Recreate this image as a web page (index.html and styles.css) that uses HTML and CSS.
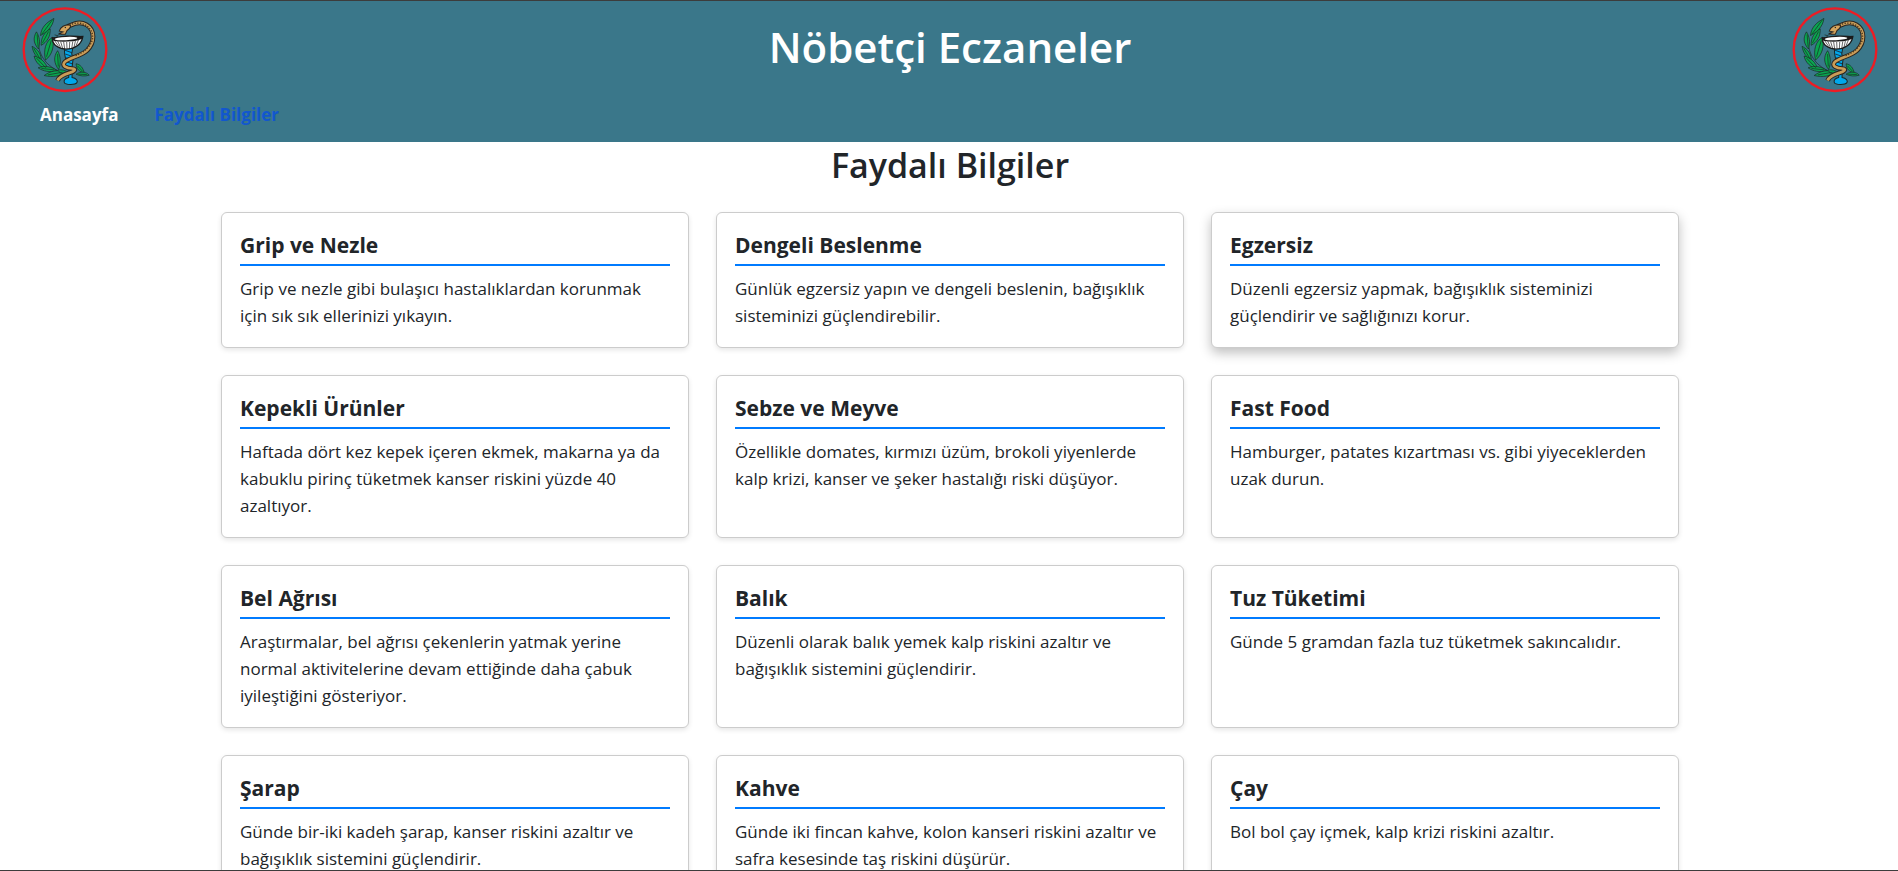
FILE: index.html
```html
<!DOCTYPE html>
<html lang="tr">
<head>
<meta charset="utf-8">
<meta name="viewport" content="width=device-width, initial-scale=1">
<title>Nöbetçi Eczaneler</title>
<link rel="stylesheet" href="styles.css">
</head>
<body>
<svg class="symbols" aria-hidden="true">
  <symbol id="eczane-logo" viewBox="22 22 256 256">
    <circle cx="150" cy="149" r="123" fill="none" stroke="#ed1c24" stroke-width="7"/>
    <!-- laurel branch -->
    <g fill="#0aa550" stroke="#1b2523" stroke-width="2" stroke-linejoin="round">
      <path d="M70 130C74 165 92 200 145 218" fill="none"/>
      <path d="M117 56C96 68 80 80 77 107C94 98 114 82 117 56Z"/>
      <path d="M65 96C53 116 58 132 71 147C77 126 74 110 65 96Z"/>
      <path d="M106 87C90 97 78 112 79 136C96 127 107 110 106 87Z"/>
      <path d="M52 139C55 158 64 171 80 182C79 162 70 148 52 139Z"/>
      <path d="M113 112C92 124 85 150 92 180C112 164 119 139 113 112Z"/>
      <path d="M58 168C62 187 76 201 99 208C93 187 80 174 58 168Z"/>
      <path d="M128 152C115 170 117 190 131 208C139 188 137 168 128 152Z"/>
      <path d="M70 203C86 214 104 217 126 211C110 199 89 196 70 203Z"/>
      <path d="M88 226C106 212 128 208 154 216C136 228 113 232 88 226Z"/>
      <path d="M128 210C142 207 153 211 166 220C150 226 138 222 128 210Z"/>
      <path d="M183 191C196 193 204 204 207 217C192 216 184 205 183 191Z"/>
      <path d="M183 222C196 213 213 214 222 225C209 229 195 228 183 222Z"/>
    </g>
    <path d="M112 61L81 103M67 104L70 140M101 95L83 129M57 145L76 177M109 122L95 170M65 174L93 203M128 162L130 199M80 205L118 209M99 224L143 216M187 197L202 213M190 222L215 223" fill="none" stroke="#1b2523" stroke-width="2"/>
    <!-- stem and foot of the cup -->
    <path d="M148 145H173L170 161L174 178L171 201V232C183 234 190 241 185 248C180 254 151 254 148 247C145 239 151 234 161 232L162 202L150 198L152 178L149 162Z" fill="#00a8ec" stroke="#1b2523" stroke-width="3"/>
    <path d="M150 151L171 158M151 162L171 169M152 173L172 180M152 184L171 191" stroke="#143b54" stroke-width="3"/>
    <!-- snake -->
    <path d="M148 88C167 72 193 63 214 75C240 90 239 128 216 151C197 169 166 171 150 185C137 197 156 205 171 205C187 206 177 215 163 218C147 223 133 228 128 241" fill="none" stroke="#2b251f" stroke-width="14"/>
    <path d="M148 88C167 72 193 63 214 75C240 90 239 128 216 151C197 169 166 171 150 185C137 197 156 205 171 205C187 206 177 215 163 218C147 223 133 228 128 241" fill="none" stroke="#c99c58" stroke-width="8"/>
    <path d="M163 76C194 61 224 76 231 101C239 132 207 158 181 167" fill="none" stroke="#4a3820" stroke-width="4" stroke-dasharray="4 4"/>
    <path d="M133 94C136 82 149 73 166 76C168 82 162 88 156 92L151 103C144 104 137 103 133 101L144 96Z" fill="#d5a55d" stroke="#2b251f" stroke-width="3"/>
    <circle cx="151" cy="83" r="2" fill="#1b2523"/>
    <path d="M136 102L127 107L119 105M127 107L126 112" fill="none" stroke="#1b2523" stroke-width="2"/>
    <!-- cup -->
    <path d="M112 114C112 158 195 160 203 110Z" fill="#fff" stroke="#1b1b1b" stroke-width="4"/>
    <path d="M119 122L131 139M128 123L137 143M137 125L143 145M146 126L149 147M155 126L156 147M164 126L163 147M173 125L170 145M181 123L177 141M190 120L183 137" stroke="#1b1b1b" stroke-width="2"/>
    <ellipse cx="157" cy="116" rx="46" ry="9" transform="rotate(-3 157 116)" fill="#1b1b1b"/>
    <ellipse cx="153" cy="116" rx="34" ry="5" transform="rotate(-3 153 116)" fill="#fff"/>
  </symbol>
</svg>

<header class="header">
  <div class="header-top">
    <svg class="logo" role="img" aria-label="Eczane logosu"><use href="#eczane-logo"/></svg>
    <h1 class="site-title">Nöbetçi Eczaneler</h1>
    <svg class="logo" role="img" aria-label="Eczane logosu"><use href="#eczane-logo"/></svg>
  </div>
  <nav class="nav">
    <a class="nav-link" href="#">Anasayfa</a>
    <a class="nav-link nav-link-active" href="#bilgiler" aria-current="page">Faydalı Bilgiler</a>
  </nav>
</header>

<main class="content" id="bilgiler">
  <h2 class="page-title">Faydalı Bilgiler</h2>
  <div class="cards">
    <article class="card"><h3 class="card-title">Grip ve Nezle</h3><p class="card-text">Grip ve nezle gibi bulaşıcı hastalıklardan korunmak için sık sık ellerinizi yıkayın.</p></article>
    <article class="card"><h3 class="card-title">Dengeli Beslenme</h3><p class="card-text">Günlük egzersiz yapın ve dengeli beslenin, bağışıklık sisteminizi güçlendirebilir.</p></article>
    <article class="card card-raised"><h3 class="card-title">Egzersiz</h3><p class="card-text">Düzenli egzersiz yapmak, bağışıklık sisteminizi güçlendirir ve sağlığınızı korur.</p></article>
    <article class="card"><h3 class="card-title">Kepekli Ürünler</h3><p class="card-text">Haftada dört kez kepek içeren ekmek, makarna ya da kabuklu pirinç tüketmek kanser riskini yüzde 40 azaltıyor.</p></article>
    <article class="card"><h3 class="card-title">Sebze ve Meyve</h3><p class="card-text">Özellikle domates, kırmızı üzüm, brokoli yiyenlerde kalp krizi, kanser ve şeker hastalığı riski düşüyor.</p></article>
    <article class="card"><h3 class="card-title">Fast Food</h3><p class="card-text">Hamburger, patates kızartması vs. gibi yiyeceklerden uzak durun.</p></article>
    <article class="card"><h3 class="card-title">Bel Ağrısı</h3><p class="card-text">Araştırmalar, bel ağrısı çekenlerin yatmak yerine normal aktivitelerine devam ettiğinde daha çabuk iyileştiğini gösteriyor.</p></article>
    <article class="card"><h3 class="card-title">Balık</h3><p class="card-text">Düzenli olarak balık yemek kalp riskini azaltır ve bağışıklık sistemini güçlendirir.</p></article>
    <article class="card"><h3 class="card-title">Tuz Tüketimi</h3><p class="card-text">Günde 5 gramdan fazla tuz tüketmek sakıncalıdır.</p></article>
    <article class="card"><h3 class="card-title">Şarap</h3><p class="card-text">Günde bir-iki kadeh şarap, kanser riskini azaltır ve bağışıklık sistemini güçlendirir.</p></article>
    <article class="card"><h3 class="card-title">Kahve</h3><p class="card-text">Günde iki fincan kahve, kolon kanseri riskini azaltır ve safra kesesinde taş riskini düşürür.</p></article>
    <article class="card"><h3 class="card-title">Çay</h3><p class="card-text">Bol bol çay içmek, kalp krizi riskini azaltır.</p></article>
  </div>
</main>
</body>
</html>
```
FILE: styles.css
```css
* { box-sizing: border-box; }

html { scrollbar-width: none; }

body {
  margin: 0;
  background: #fff;
  color: #212529;
  font-family: "Segoe UI", "Open Sans", "Noto Sans", sans-serif;
  font-size: 17px;
  line-height: 27px;
}

/* thin frame line along the bottom of the window */
body::after {
  content: "";
  position: fixed;
  left: 0;
  right: 0;
  bottom: 0;
  height: 1px;
  background: #3c3c3c;
}

.symbols { position: absolute; width: 0; height: 0; }

.header {
  padding: 6px 20px 14px 22px;
  border-top: 1px solid #3c3c3c;
  background: #3a778a;
}

.header-top {
  display: flex;
  justify-content: space-between;
  align-items: flex-start;
}

.logo { width: 86px; height: 86px; flex: none; }

.site-title {
  margin: 13px 0 0;
  color: #fff;
  font-size: 42px;
  font-weight: 600;
  line-height: 54px;
}

.nav {
  display: flex;
  gap: 36px;
  padding: 8px 18px 0;
}

.nav-link {
  color: #fff;
  font-weight: 700;
  text-decoration: none;
}

.nav-link-active { color: #1257ce; }

.content {
  max-width: 1486px;
  margin: 0 auto;
  padding: 1px 13px 27px 15px;
}

.page-title {
  margin: 0 0 25px;
  font-size: 34px;
  font-weight: 600;
  line-height: 44px;
  text-align: center;
}

.cards {
  display: grid;
  grid-template-columns: repeat(3, 1fr);
  gap: 27px;
}

.card {
  padding: 18px;
  border: 1px solid #ccc;
  border-radius: 6px;
  background: #fff;
  box-shadow: 0 2px 5px rgba(0, 0, 0, 0.1);
}

.card-raised { box-shadow: 0 5px 12px rgba(0, 0, 0, 0.25); }

.card-title {
  margin: 0 0 9px;
  padding-bottom: 4px;
  border-bottom: 2px solid #007bff;
  font-size: 21px;
  font-weight: 700;
  line-height: 29px;
}

.card-text { margin: 0; }

@media (max-width: 900px) {
  .cards { grid-template-columns: 1fr; }
  .site-title { font-size: 28px; }
}
```
